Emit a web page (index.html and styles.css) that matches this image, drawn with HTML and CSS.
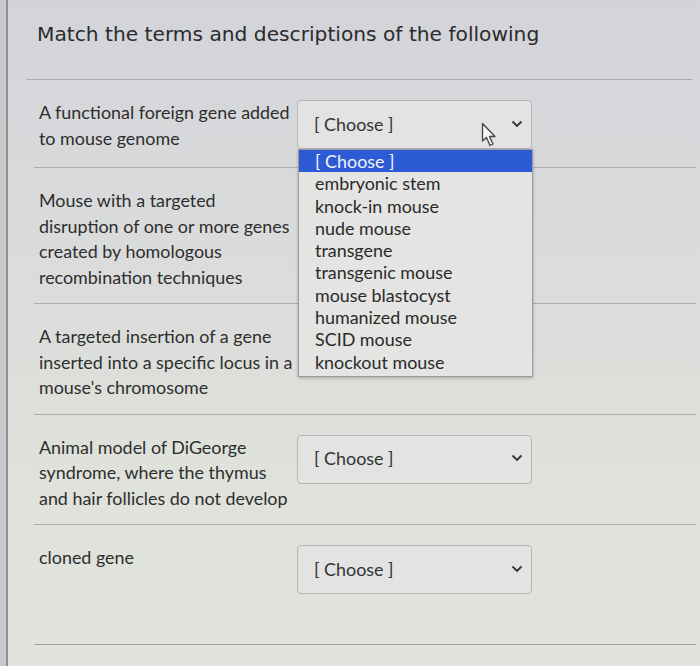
FILE: index.html
```html
<!DOCTYPE html>
<html>
<head>
<meta charset="utf-8">
<link rel="stylesheet" href="styles.css">
</head>
<body>
<div class="screen">
  <div class="frame">
    <h1 class="title">Match the terms and descriptions of the following</h1>
    <div class="rows">
      <div class="row first">
        <div class="term">A functional foreign gene added to mouse genome</div>
        <div class="pick">
          <div class="select"><span>[ Choose ]</span><svg class="chev" width="12" height="8" viewBox="0 0 12 8"><path d="M1.5 1.5 L6 6 L10.5 1.5" fill="none" stroke="#333" stroke-width="1.8"/></svg></div>
          <ul class="menu">
            <li class="sel">[ Choose ]</li>
            <li>embryonic stem</li>
            <li>knock-in mouse</li>
            <li>nude mouse</li>
            <li>transgene</li>
            <li>transgenic mouse</li>
            <li>mouse blastocyst</li>
            <li>humanized mouse</li>
            <li>SCID mouse</li>
            <li>knockout mouse</li>
          </ul>
          <svg class="cursor" width="18" height="26" viewBox="0 0 18 26"><path d="M1.5 1.5 L1.5 19 L5.5 15.5 L9 23.5 L12 22 L8.5 14.5 L14 14.5 Z" fill="#f4f4f4" stroke="#444" stroke-width="1.3" stroke-linejoin="round"/></svg>
        </div>
      </div>
      <div class="row">
        <div class="term">Mouse with a targeted disruption of one or more genes created by homologous recombination techniques</div>
        <div class="pick"></div>
      </div>
      <div class="row">
        <div class="term">A targeted insertion of a gene inserted into a specific locus in a mouse's chromosome</div>
        <div class="pick"></div>
      </div>
      <div class="row">
        <div class="term">Animal model of DiGeorge syndrome, where the thymus and hair follicles do not develop</div>
        <div class="pick">
          <div class="select"><span>[ Choose ]</span><svg class="chev" width="12" height="8" viewBox="0 0 12 8"><path d="M1.5 1.5 L6 6 L10.5 1.5" fill="none" stroke="#333" stroke-width="1.8"/></svg></div>
        </div>
      </div>
      <div class="row last">
        <div class="term">cloned gene</div>
        <div class="pick">
          <div class="select"><span>[ Choose ]</span><svg class="chev" width="12" height="8" viewBox="0 0 12 8"><path d="M1.5 1.5 L6 6 L10.5 1.5" fill="none" stroke="#333" stroke-width="1.8"/></svg></div>
        </div>
      </div>
    </div>
  </div>
</div>
</body>
</html>
```
FILE: styles.css
```css
html, body {
  margin: 0;
  padding: 0;
}
body {
  width: 700px;
  height: 666px;
  overflow: hidden;
  background: #dcdedb;
  font-family: "Lato", "Open Sans", sans-serif;
  color: #2f2f2f;
}
.screen {
  padding-left: 6px;
  background: #c9cacc;
  height: 666px;
  box-sizing: border-box;
}
.frame {
  height: 666px;
  border-left: 2px solid #8f9092;
  background: linear-gradient(180deg, #d3d4d9 0%, #d9dadb 30%, #dfe1db 70%, #e1e3dd 100%);
  padding-left: 18px;
  box-sizing: border-box;
}
.title {
  margin: 0 8px 0 0;
  padding: 22px 0 0 11px;
  height: 80px;
  box-sizing: border-box;
  font-family: "DejaVu Sans", sans-serif;
  font-weight: normal;
  font-size: 20.2px;
  line-height: 24px;
  color: #2b2b2c;
  border-bottom: 1px solid #a9abad;
}
.rows {
  padding-left: 8px;
  margin-right: 4px;
}
.row {
  display: flex;
  align-items: flex-start;
  padding: 20px 0 13px;
  border-bottom: 1px solid #acaeab;
}
.row.first {
  padding-bottom: 16px;
}
.row.last {
  padding-bottom: 50px;
  border-bottom-color: #9c9e9c;
}
.term {
  width: 258px;
  padding-left: 5px;
  font-size: 17.9px;
  line-height: 25.5px;
  color: #2e2e2e;
}
.pick {
  position: relative;
  width: 235px;
}
.select {
  height: 49px;
  box-sizing: border-box;
  border: 1px solid #b4b6b5;
  border-radius: 4px;
  background: #e2e3e2;
  display: flex;
  align-items: center;
  justify-content: space-between;
  padding: 0 8px 0 16px;
  font-size: 17.9px;
  color: #333;
}
.select span {
  margin-top: -2px;
}
.chev {
  margin-top: -2px;
}
.menu {
  position: absolute;
  left: 1px;
  top: 49px;
  width: 235px;
  margin: 0;
  padding: 0 0 3px;
  list-style: none;
  background: #e4e5e3;
  border: 1px solid #9a9c9e;
  box-shadow: 0 1px 3px rgba(0,0,0,0.25);
  box-sizing: border-box;
  font-size: 17.9px;
  z-index: 2;
}
.menu li {
  height: 22.3px;
  line-height: 22px;
  padding-left: 16px;
  color: #2a2a2a;
}
.menu li.sel {
  background: #2d5bd6;
  color: #f2f4fb;
}
.cursor {
  position: absolute;
  left: 184px;
  top: 22px;
  z-index: 3;
}
```
